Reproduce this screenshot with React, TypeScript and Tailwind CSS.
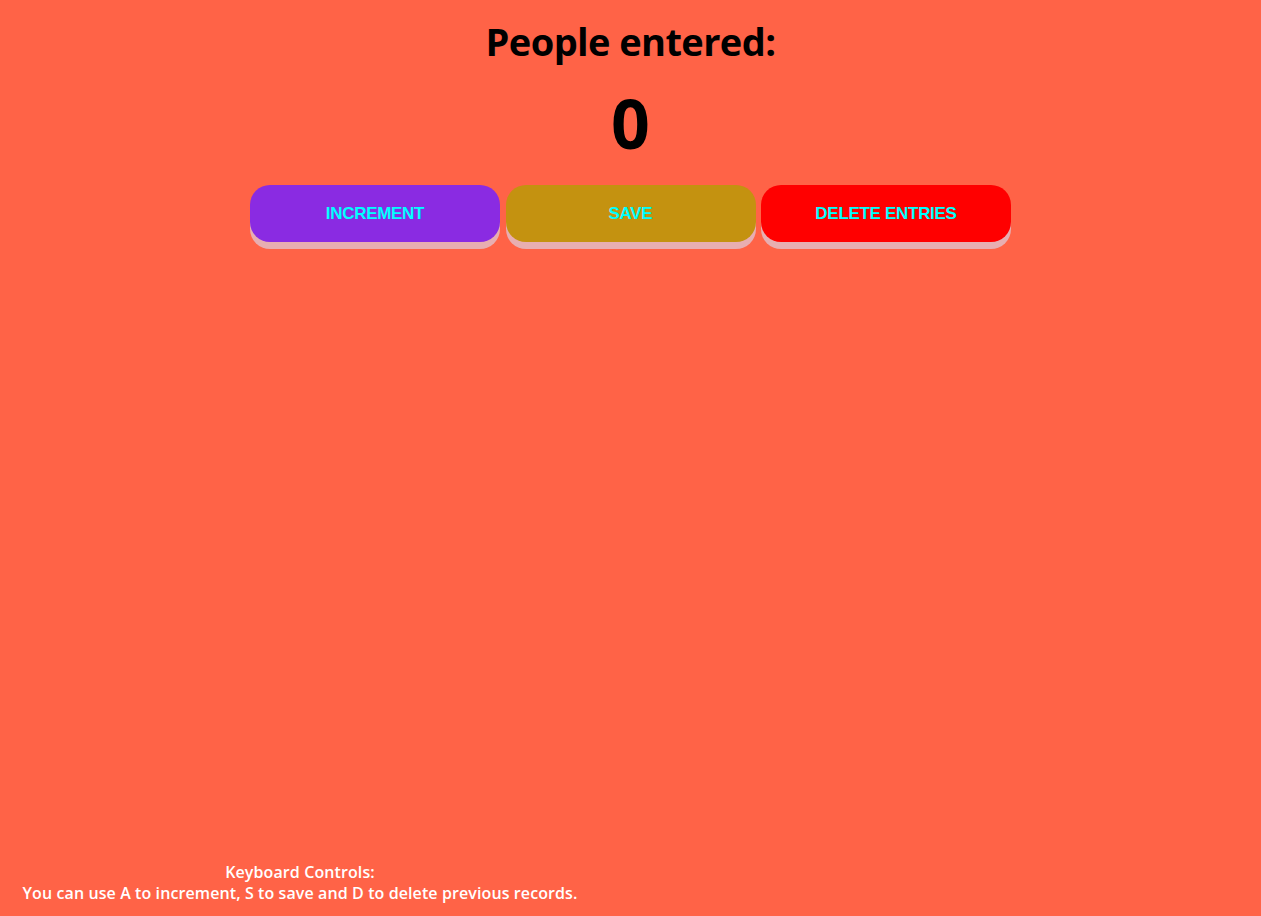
import React from "react";

export default function App() {
  const font = { fontFamily: '"Segoe UI", "Open Sans", "Noto Sans", sans-serif' };
  return (
    <div className="min-h-[916px] h-[916px] w-full bg-[#ff6347] flex flex-col" style={font}>
      <div className="flex flex-col items-center">
        <h1 className="mt-[15px] text-[38px] leading-[52px] font-bold text-black tracking-[-0.6px]">People entered:</h1>
        <div className="mt-[12px] text-[68px] leading-[88px] font-bold text-black">0</div>
        <div className="mt-[18px] flex gap-[5.5px]">
          {[
            ["INCREMENT", "bg-[#8a2be2]"],
            ["SAVE", "bg-[#c49210]"],
            ["DELETE ENTRIES", "bg-[#ff0000]"],
          ].map(([label, bg]) => (
            <button
              key={label}
              className={`${bg} w-[250px] h-[57px] rounded-[20px] shadow-[0_7px_0_#e8aeb1] text-[#00ffff] text-[17px] font-bold tracking-[-0.3px]`}
              style={{ fontFamily: '"Liberation Sans", Arial, sans-serif' }}
            >
              {label}
            </button>
          ))}
        </div>
      </div>
      <div className="mt-auto mb-[12px] w-[600px] text-center text-white font-semibold text-[16px] leading-[21px] tracking-[0.1px]">
        <div>Keyboard Controls:</div>
        <div>You can use A to increment, S to save and D to delete previous records.</div>
      </div>
    </div>
  );
}
